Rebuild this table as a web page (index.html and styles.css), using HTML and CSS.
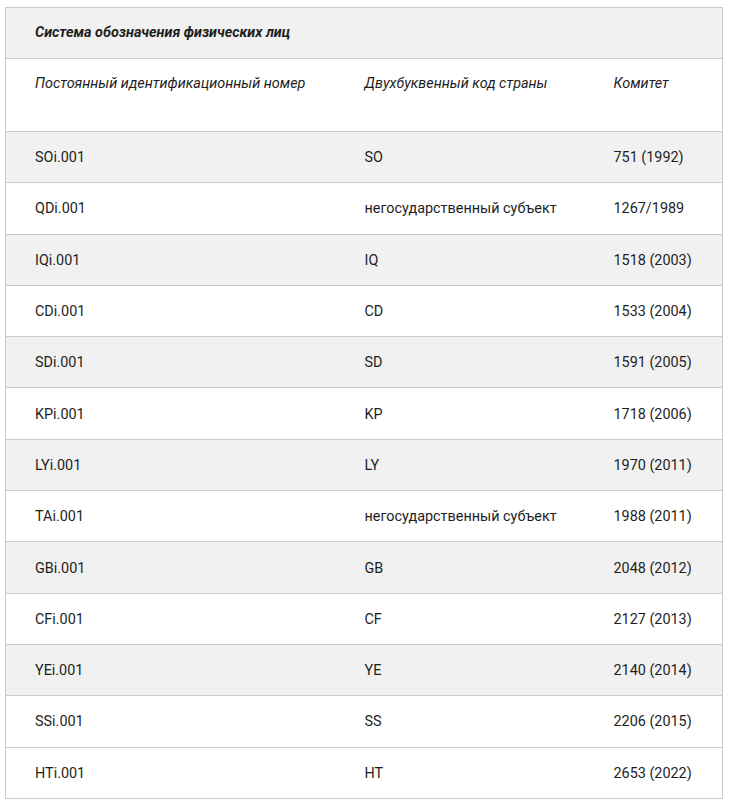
FILE: index.html
```html
<!DOCTYPE html>
<html lang="ru">
<head>
<meta charset="utf-8">
<title>Система обозначения физических лиц</title>
<link rel="stylesheet" href="styles.css">
</head>
<body>
<table class="tbl">
  <colgroup>
    <col class="c1">
    <col class="c2">
    <col class="c3">
  </colgroup>
  <thead>
    <tr class="title-row"><th colspan="3">Система обозначения физических лиц</th></tr>
    <tr class="head-row">
      <td>Постоянный идентификационный номер</td>
      <td>Двухбуквенный код страны</td>
      <td>Комитет</td>
    </tr>
  </thead>
  <tbody>
    <tr class="gray"><td>SOi.001</td><td>SO</td><td>751 (1992)</td></tr>
    <tr><td>QDi.001</td><td>негосударственный субъект</td><td>1267/1989</td></tr>
    <tr class="gray"><td>IQi.001</td><td>IQ</td><td>1518 (2003)</td></tr>
    <tr><td>CDi.001</td><td>CD</td><td>1533 (2004)</td></tr>
    <tr class="gray"><td>SDi.001</td><td>SD</td><td>1591 (2005)</td></tr>
    <tr><td>KPi.001</td><td>KP</td><td>1718 (2006)</td></tr>
    <tr class="gray"><td>LYi.001</td><td>LY</td><td>1970 (2011)</td></tr>
    <tr><td>TAi.001</td><td>негосударственный субъект</td><td>1988 (2011)</td></tr>
    <tr class="gray"><td>GBi.001</td><td>GB</td><td>2048 (2012)</td></tr>
    <tr><td>CFi.001</td><td>CF</td><td>2127 (2013)</td></tr>
    <tr class="gray"><td>YEi.001</td><td>YE</td><td>2140 (2014)</td></tr>
    <tr><td>SSi.001</td><td>SS</td><td>2206 (2015)</td></tr>
    <tr><td>HTi.001</td><td>HT</td><td>2653 (2022)</td></tr>
  </tbody>
</table>
</body>
</html>
```

FILE: styles.css
```css
body {
  margin: 7px 0 0 5px;
  background: #fff;
  font-family: Roboto, "Noto Sans", sans-serif;
  font-size: 14.4px;
  color: #1e1e1e;
}

.tbl {
  border-collapse: collapse;
  width: 717px;
  table-layout: fixed;
  border: 1px solid #ccc;
}

.c1 { width: 330px; }
.c2 { width: 249px; }
.c3 { width: 138px; }

.tbl td,
.tbl th {
  padding: 0 0 0 29px;
  text-align: left;
  line-height: 20px;
  border-bottom: 1px solid #ccc;
}

.title-row {
  background: #f1f1f1;
  height: 51px;
}

.title-row th {
  font-weight: 700;
  font-style: italic;
  vertical-align: middle;
}

.head-row {
  height: 73px;
}

.head-row td {
  font-style: italic;
  vertical-align: top;
  padding-top: 15px;
}

.tbl tbody tr {
  height: 51.3px;
}

.tbl tbody td {
  vertical-align: middle;
  padding-top: 2px;
}

.tbl tbody tr.gray {
  background: #f1f1f1;
}
```
